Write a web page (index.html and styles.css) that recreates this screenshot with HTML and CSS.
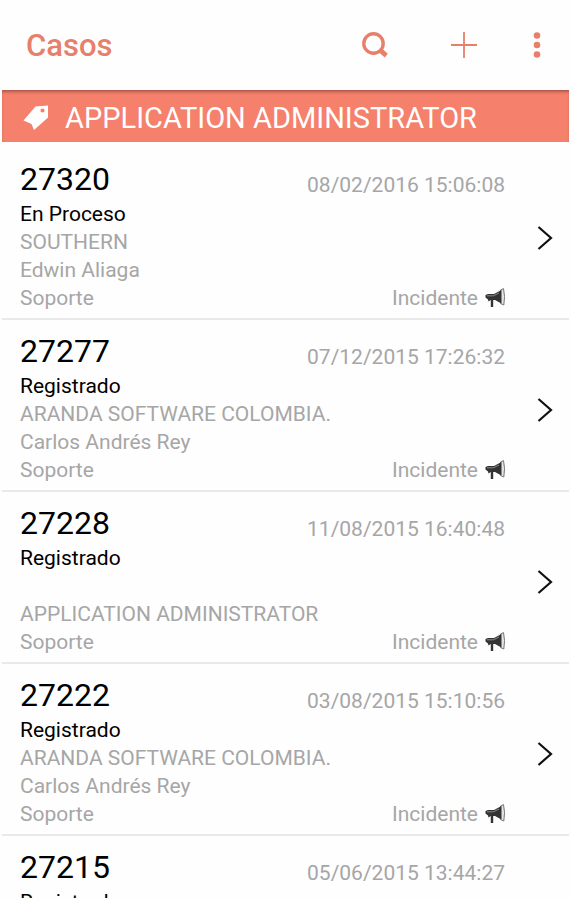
FILE: index.html
```html
<!DOCTYPE html>
<html lang="es">
<head>
  <meta charset="UTF-8" />
  <meta name="viewport" content="width=device-width, initial-scale=1.0"/>
  <title>Casos</title>
  <link rel="stylesheet" href="styles.css">
</head>
<body>
  <!-- Shared icons -->
  <svg class="sprite" aria-hidden="true">
    <symbol id="chevron" viewBox="0 0 16 26">
      <path d="M1.500 2L14 13L1.500 24" fill="none" stroke="#111" stroke-width="2.200"/>
    </symbol>
    <symbol id="megaphone" viewBox="0 0 20 20">
      <path d="M15.500 2L18.500 0.600Q20.500 8.500 18.800 17L15.500 15.500Z" fill="#e4e4e4" stroke="#777" stroke-width="1"/>
      <path d="M0.500 7L3 6L9 6L16.500 2V15.500L10 12H8.200V19H5.800V12L3.500 13.500L3 11.500L0.500 9.500Z" fill="#333"/>
      <path d="M2 7.800H8.500L14 5" fill="none" stroke="#8a8a8a" stroke-width="1"/>
    </symbol>
  </svg>

  <header class="topbar">
    <h1>Casos</h1>
    <button class="icon-btn" aria-label="Buscar">
      <svg width="26" height="26" viewBox="0 0 26 26">
        <circle cx="11.500" cy="11.500" r="9.700" fill="none" stroke="currentColor" stroke-width="3.400"/>
        <path d="M16.500 20L20 16.500L25.800 21.800L22.800 25.500Z" fill="currentColor"/>
      </svg>
    </button>
    <button class="icon-btn" aria-label="Agregar">
      <svg width="26" height="26" viewBox="0 0 26 26">
        <path d="M13 0V26M0 13H26" stroke="currentColor" stroke-width="1.800"/>
      </svg>
    </button>
    <button class="icon-btn menu-btn" aria-label="Menú">
      <svg width="8" height="26" viewBox="0 0 8 26" fill="currentColor">
        <circle cx="4" cy="3.500" r="3.300"/>
        <circle cx="4" cy="13" r="3.300"/>
        <circle cx="4" cy="22.500" r="3.300"/>
      </svg>
    </button>
  </header>

  <main class="content">
    <h2 class="banner">
      <svg width="26" height="26" viewBox="0 0 26 26" aria-hidden="true">
        <path fill-rule="evenodd" d="M12.500 1.500L25 0.500L25 12.500L11 25L8.500 19L0.500 15.500ZM19.500 3.400A2.100 2.100 0 1 0 19.500 7.600A2.100 2.100 0 1 0 19.500 3.400Z" fill="#fff"/>
      </svg>
      APPLICATION ADMINISTRATOR
    </h2>

    <ul class="cases">
      <li><a class="case" href="#27320">
        <div class="info">
          <div class="line first"><span class="number">27320</span><time>08/02/2016 15:06:08</time></div>
          <div class="line status">En Proceso</div>
          <div class="line">SOUTHERN</div>
          <div class="line">Edwin Aliaga</div>
          <div class="line"><span>Soporte</span><span class="type">Incidente <svg><use href="#megaphone"/></svg></span></div>
        </div>
        <svg class="arrow"><use href="#chevron"/></svg>
      </a></li>
      <li><a class="case" href="#27277">
        <div class="info">
          <div class="line first"><span class="number">27277</span><time>07/12/2015 17:26:32</time></div>
          <div class="line status">Registrado</div>
          <div class="line">ARANDA SOFTWARE COLOMBIA.</div>
          <div class="line">Carlos Andrés Rey</div>
          <div class="line"><span>Soporte</span><span class="type">Incidente <svg><use href="#megaphone"/></svg></span></div>
        </div>
        <svg class="arrow"><use href="#chevron"/></svg>
      </a></li>
      <li><a class="case" href="#27228">
        <div class="info">
          <div class="line first"><span class="number">27228</span><time>11/08/2015 16:40:48</time></div>
          <div class="line status">Registrado</div>
          <div class="line"></div>
          <div class="line">APPLICATION ADMINISTRATOR</div>
          <div class="line"><span>Soporte</span><span class="type">Incidente <svg><use href="#megaphone"/></svg></span></div>
        </div>
        <svg class="arrow"><use href="#chevron"/></svg>
      </a></li>
      <li><a class="case" href="#27222">
        <div class="info">
          <div class="line first"><span class="number">27222</span><time>03/08/2015 15:10:56</time></div>
          <div class="line status">Registrado</div>
          <div class="line">ARANDA SOFTWARE COLOMBIA.</div>
          <div class="line">Carlos Andrés Rey</div>
          <div class="line"><span>Soporte</span><span class="type">Incidente <svg><use href="#megaphone"/></svg></span></div>
        </div>
        <svg class="arrow"><use href="#chevron"/></svg>
      </a></li>
      <li><a class="case" href="#27215">
        <div class="info">
          <div class="line first"><span class="number">27215</span><time>05/06/2015 13:44:27</time></div>
          <div class="line status">Registrado</div>
          <div class="line"></div>
          <div class="line"></div>
          <div class="line"></div>
        </div>
        <svg class="arrow"><use href="#chevron"/></svg>
      </a></li>
    </ul>
  </main>
</body>
</html>
```
FILE: styles.css
```css
:root {
  --primary: #e77f6b;
  --banner: #f5806c;
  --text: #000;
  --muted: #a6a6a6;
  --line: #e9e9e9;
}
*{margin:0;padding:0;box-sizing:border-box;}
body {
  height:100vh; display:flex; flex-direction:column; overflow:hidden;
  padding:0 2px 2px; background:#fefefe; color:var(--text);
  font-family:Roboto,sans-serif; font-size:21px; line-height:28px;
}
.sprite {display:none;}

.topbar {
  flex:none; display:flex; align-items:center; height:90px;
  padding:0 28px 0 24px; color:var(--primary);
}
.topbar h1 {flex:1; padding-top:2px; font-size:31px; font-weight:500; line-height:36px;}
.icon-btn {
  display:flex; background:none; border:none; color:inherit; cursor:pointer; margin-left:63px;
}
.menu-btn {margin-left:56px;}

.content {flex:1; min-height:0; overflow:hidden;}
.banner {
  display:flex; align-items:center; gap:16px; height:52px; padding:3px 21px 0;
  background:var(--banner); color:#fff; font-size:29px; font-weight:400; line-height:36px;
  box-shadow:inset 0 3px 3px -1px #b0594a;
}

.cases {list-style:none; padding-top:6px;}
.case {
  display:flex; align-items:center; gap:32px; padding:10px 16px 6px 18px;
  border-bottom:2px solid var(--line); color:var(--muted); text-decoration:none;
}
.info {flex:1;}
.line {display:flex; justify-content:space-between; min-height:28px;}
.first {height:42px; line-height:42px;}
.first time {padding-top:6px;}
.number {font-size:32px; color:var(--text);}
.status {color:var(--text);}
.type {display:flex; align-items:center; gap:7px;}
.type svg {width:20px; height:20px;}
.arrow {flex:none; width:16px; height:26px; margin-top:6px;}
```
